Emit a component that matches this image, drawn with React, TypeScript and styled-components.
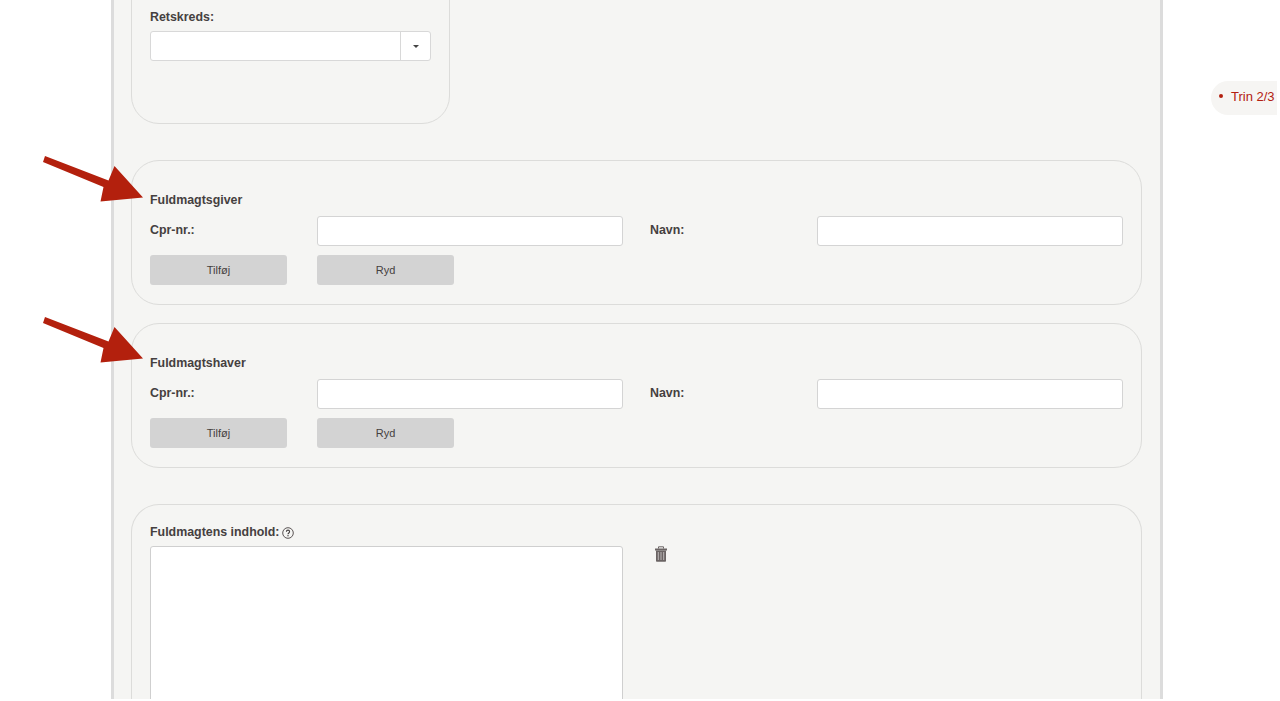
import React from "react";
import styled, { createGlobalStyle } from "styled-components";

const Global = createGlobalStyle`
  html, body { margin: 0; padding: 0; background: #fff; height: 100%; overflow: hidden; }
  body { font-family: "Liberation Sans", Arial, sans-serif; color: #454040; }
`;

const Panel = styled.main`
  box-sizing: border-box;
  display: flow-root;
  width: 1052px;
  height: 699px;
  margin-left: 111px;
  padding: 0 18px 0 17px;
  background: #f5f5f3;
  border-left: 3px solid #dcdcdc;
  border-right: 3px solid #dcdcdc;
`;

const Box = styled.section<{ $narrow?: boolean; $gap: number }>`
  position: relative;
  box-sizing: border-box;
  width: ${(p) => (p.$narrow ? "319px" : "1011px")};
  margin-bottom: ${(p) => p.$gap}px;
  border: 1px solid #dcdcda;
  border-radius: 28px;
`;

const TopBox = styled(Box)`
  height: 184px;
  margin-top: -60px;
  padding: 69px 18px 0;
`;

const FormBox = styled(Box)`
  height: 145px;
  padding: 32px 18px 0;
`;

const ContentBox = styled(Box)`
  height: 195px;
  padding: 20px 18px 0;
  border-bottom: none;
  border-radius: 28px 28px 0 0;
  overflow: hidden;
`;

const Label = styled.div`
  font-size: 12.4px;
  font-weight: 700;
  line-height: 14px;
  color: #454040;
`;

const SelectLabel = styled(Label)`
  margin-bottom: 7px;
`;

const Select = styled.div`
  box-sizing: border-box;
  display: flex;
  width: 281px;
  height: 30px;
  background: #fff;
  border: 1px solid #d8d8d8;
  border-radius: 3px;
`;

const SelectValue = styled.div`
  flex: 1;
`;

const SelectToggle = styled.div`
  display: flex;
  align-items: center;
  justify-content: center;
  width: 29px;
  border-left: 1px solid #d8d8d8;
  &::after {
    content: "";
    border-top: 3px solid #444;
    border-left: 3px solid transparent;
    border-right: 3px solid transparent;
  }
`;

const FieldRow = styled.div`
  display: grid;
  grid-template-columns: 140px 306px 140px 306px;
  column-gap: 27px;
  align-items: center;
  margin-top: 9px;
`;

const FieldLabel = styled(Label)`
  margin-top: -3px;
`;

const TextInput = styled.input`
  box-sizing: border-box;
  width: 306px;
  height: 30px;
  padding: 0 6px;
  background: #fff;
  border: 1px solid #d4d4d4;
  border-radius: 3px;
  outline: none;
`;

const ButtonRow = styled.div`
  display: flex;
  gap: 30px;
  margin-top: 9px;
`;

const Button = styled.button`
  width: 137px;
  height: 30px;
  padding: 0;
  background: #d3d3d3;
  border: none;
  border-radius: 3px;
  font-family: "Liberation Sans", Arial, sans-serif;
  font-size: 11px;
  color: #454040;
`;

const LabelLine = styled.div`
  display: flex;
  align-items: center;
  gap: 3px;
  margin-bottom: 7px;
`;

const ContentRow = styled.div`
  display: flex;
  gap: 31px;
`;

const TextArea = styled.textarea`
  box-sizing: border-box;
  display: block;
  width: 473px;
  height: 240px;
  background: #fff;
  border: 1px solid #cfcfcf;
  border-radius: 3px;
  outline: none;
  resize: none;
`;

const TrashButton = styled.div`
  width: 14px;
  height: 16px;
`;

const ArrowMark = styled.svg<{ $top: number }>`
  position: absolute;
  left: -91px;
  top: ${(p) => p.$top}px;
  width: 104px;
  height: 50px;
`;

const HelpMark = styled.svg`
  margin-top: 2px;
`;

const StepPill = styled.aside`
  position: fixed;
  top: 81px;
  right: 3px;
  box-sizing: border-box;
  display: flex;
  align-items: center;
  gap: 8px;
  width: 66px;
  height: 34px;
  padding: 0 0 4px 8px;
  background: #f6f5f3;
  border-radius: 17px 0 0 17px;
  font-size: 13px;
  color: #b32010;
  white-space: nowrap;
  &::before {
    content: "";
    width: 4px;
    height: 4px;
    border-radius: 50%;
    background: #b32010;
    flex: none;
  }
`;

const Arrow = ({ top }: { top: number }) => (
  <ArrowMark $top={top} viewBox="0 0 104 50" aria-hidden="true">
    <polygon
      points="4,2 2,8 62.5,33 59.5,47.5 102,43.5 73.5,12 67.5,26.5"
      fill="#b3200d"
    />
  </ArrowMark>
);

const HelpIcon = () => (
  <HelpMark width="12" height="12" viewBox="0 0 12 12" aria-hidden="true">
    <circle cx="6" cy="6" r="5.3" fill="none" stroke="#5a5454" strokeWidth="1" />
    <path d="M4.4 4.8c0-2.2 3.2-2.2 3.2 0C7.6 6 6 6 6 7.3" fill="none" stroke="#454040" strokeWidth="1.1" />
    <rect x="5.4" y="8.1" width="1.2" height="1.2" fill="#454040" />
  </HelpMark>
);

const TrashIcon = () => (
  <svg width="14" height="16" viewBox="0 0 14 16" aria-hidden="true">
    <path d="M4.5 2.5V.8h5v1.7" fill="none" stroke="#6b6464" strokeWidth="1" />
    <rect x="1" y="2.5" width="12" height="2" fill="#6b6464" />
    <path d="M2 4.5h10V15a.8.8 0 0 1-.8.8H2.8A.8.8 0 0 1 2 15z" fill="#6b6464" />
    <path d="M4.3 6v8M7 6v8M9.7 6v8" stroke="#bdb8b8" strokeWidth="1" />
  </svg>
);

const PersonBox = ({ title, gap, arrowTop }: { title: string; gap: number; arrowTop: number }) => (
  <FormBox $gap={gap}>
    <Arrow top={arrowTop} />
    <Label>{title}</Label>
    <FieldRow>
      <FieldLabel>Cpr-nr.:</FieldLabel>
      <TextInput />
      <FieldLabel>Navn:</FieldLabel>
      <TextInput />
    </FieldRow>
    <ButtonRow>
      <Button>Tilføj</Button>
      <Button>Ryd</Button>
    </ButtonRow>
  </FormBox>
);

export default function App() {
  return (
    <>
      <Global />
      <Panel>
        <TopBox $narrow $gap={36}>
          <SelectLabel>Retskreds:</SelectLabel>
          <Select>
            <SelectValue />
            <SelectToggle />
          </Select>
        </TopBox>
        <PersonBox title="Fuldmagtsgiver" gap={18} arrowTop={-7} />
        <PersonBox title="Fuldmagtshaver" gap={36} arrowTop={-9} />
        <ContentBox $gap={0}>
          <LabelLine>
            <Label>Fuldmagtens indhold:</Label>
            <HelpIcon />
          </LabelLine>
          <ContentRow>
            <TextArea />
            <TrashButton>
              <TrashIcon />
            </TrashButton>
          </ContentRow>
        </ContentBox>
      </Panel>
      <StepPill>Trin 2/3</StepPill>
    </>
  );
}
